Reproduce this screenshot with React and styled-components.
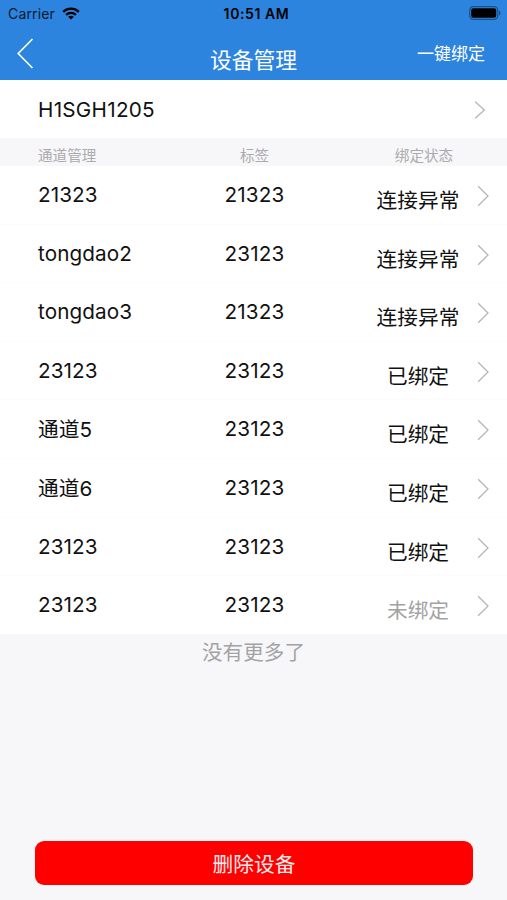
import React from 'react';
import styled, { createGlobalStyle } from 'styled-components';

const GlobalStyle = createGlobalStyle`
  * {
    box-sizing: border-box;
  }

  body {
    margin: 0;
    background: #f7f7fa;
    font-family: Inter, "Noto Sans CJK SC", sans-serif;
    color: #111;
  }
`;

const Page = styled.div`
  display: flex;
  flex-direction: column;
  height: 900px;
`;

const Header = styled.header`
  height: 80px;
  background: #2d84df;
  color: #fff;
`;

const StatusBar = styled.div`
  display: grid;
  grid-template-columns: 1fr auto 1fr;
  align-items: center;
  height: 28px;
  padding: 0 5px 0 8px;
  color: #06182b;
  font-size: 14px;
`;

const Carrier = styled.div`
  display: flex;
  align-items: center;
  gap: 7px;
  height: 26px;
  margin-bottom: 2px;
  letter-spacing: 0.15px;
`;

const Time = styled.div`
  margin-bottom: 2px;
  padding-left: 3px;
  color: #000;
  font-size: 14px;
  font-weight: 600;
  letter-spacing: 0.6px;
`;

const Battery = styled.svg`
  justify-self: end;
  margin-bottom: 2px;
`;

const NavBar = styled.nav`
  display: grid;
  grid-template-columns: 1fr auto 1fr;
  height: 52px;
  padding: 0 22px 0 17px;
`;

const BackIcon = styled.svg`
  margin-top: 10px;
`;

const Title = styled.h1`
  margin: 16px 0 0 5px;
  font-size: 21.8px;
  font-weight: 400;
  line-height: 32px;
`;

const NavAction = styled.span`
  justify-self: end;
  margin-top: 14px;
  font-size: 17px;
  line-height: 24px;
`;

const DeviceRow = styled.div`
  display: flex;
  align-items: center;
  justify-content: space-between;
  height: 58px;
  padding: 0 21px 0 38px;
  background: #fff;
  font-size: 20.7px;
  letter-spacing: 0.27px;
`;

const DeviceIcon = styled.svg`
  margin-top: 2px;
`;

const Columns = styled.div`
  display: grid;
  grid-template-columns: 172px 165px 162px;
`;

const ColumnHeads = styled(Columns)`
  height: 28px;
  padding-top: 6px;
  color: #ababad;
  font-size: 14.6px;
  line-height: 24px;
  text-align: center;
`;

const FirstHead = styled.span`
  padding-left: 38px;
  text-align: left;
`;

const LastHead = styled.span`
  padding-left: 12px;
`;

const List = styled.div`
  height: 468px;
  overflow: hidden;
  background: #fff;
`;

const Row = styled(Columns)`
  grid-template-columns: 172px 165px 162px 1fr;
  height: 58.6px;
  border-bottom: 1px solid #fcfcfc;
  font-size: 20.7px;
  line-height: 30px;
`;

const Name = styled.div`
  padding: ${props => (props.$cjk ? '15px' : '14px')} 0 0 38px;
  letter-spacing: ${props => (props.$cjk ? '0' : '0.1px')};
`;

const Tag = styled.div`
  padding-top: 14px;
  letter-spacing: 0.2px;
  text-align: center;
`;

const State = styled.div`
  display: grid;
  grid-template-columns: 1fr 30px;
  color: ${props => (props.$muted ? '#a3a3a3' : '#111')};
`;

const StateText = styled.span`
  padding: 20px 0 0 30px;
  text-align: center;
`;

const RowIcon = styled.svg`
  margin: 19px 0 0 8px;
`;

const Footnote = styled.p`
  margin: 4px 0 0;
  color: #a3a3a5;
  font-size: 20.6px;
  line-height: 30px;
  text-align: center;
`;

const DeleteButton = styled.button`
  height: 44px;
  margin: auto 34px 15px 35px;
  padding: 0;
  border: 0;
  border-radius: 9px;
  background: #f00;
  color: #ffecec;
  font-family: inherit;
  font-size: 20.7px;
`;

const channels = [
  { name: '21323', tag: '21323', state: '连接异常' },
  { name: 'tongdao2', tag: '23123', state: '连接异常' },
  { name: 'tongdao3', tag: '21323', state: '连接异常' },
  { name: '23123', tag: '23123', state: '已绑定' },
  { name: '通道5', cjk: true, tag: '23123', state: '已绑定' },
  { name: '通道6', cjk: true, tag: '23123', state: '已绑定' },
  { name: '23123', tag: '23123', state: '已绑定' },
  { name: '23123', tag: '23123', state: '未绑定', muted: true },
];

export default class App extends React.Component {
  render() {
    return (
      <Page>
        <GlobalStyle />

        <Header>
          <StatusBar>
            <Carrier>
              Carrier
              <svg width="18" height="13" viewBox="0 0 18 13" fill="none" stroke="#000" strokeWidth="2.3">
                <path d="M1.2 4.8C5.6 0.6 12.4 0.6 16.8 4.8" />
                <path d="M4.1 7.9C6.9 5.3 11.1 5.3 13.9 7.9" />
                <path d="M9 12.6L6.1 9.8C7.7 8.4 10.3 8.4 11.9 9.8Z" fill="#000" stroke="none" />
              </svg>
            </Carrier>
            <Time>10:51 AM</Time>
            <Battery width="33" height="14" viewBox="0 0 33 14">
              <rect x="0.7" y="0.7" width="28" height="12.6" rx="3.6" fill="none" stroke="#1b4f86" strokeWidth="1.2" />
              <rect x="2.2" y="2.2" width="25" height="9.6" rx="2" fill="#000" />
              <path d="M30 4.6C32 5.4 32 8.6 30 9.4Z" fill="#1b4f86" />
            </Battery>
          </StatusBar>

          <NavBar>
            <BackIcon width="17" height="31" viewBox="0 0 17 31" fill="none" stroke="#fff" strokeWidth="1.6">
              <path d="M15.5 1L1.2 15.5L15.5 30" />
            </BackIcon>
            <Title>设备管理</Title>
            <NavAction>一键绑定</NavAction>
          </NavBar>
        </Header>

        <DeviceRow>
          H1SGH1205
          <DeviceIcon width="12" height="18" viewBox="0 0 12 18" fill="none" stroke="#b5b5b8" strokeWidth="1.3">
            <path d="M1.2 0.8L10.4 9L1.2 17.2" />
          </DeviceIcon>
        </DeviceRow>

        <ColumnHeads>
          <FirstHead>通道管理</FirstHead>
          <span>标签</span>
          <LastHead>绑定状态</LastHead>
        </ColumnHeads>

        <List>
          {channels.map((channel, i) => (
            <Row key={i}>
              <Name $cjk={channel.cjk}>{channel.name}</Name>
              <Tag>{channel.tag}</Tag>
              <State $muted={channel.muted}>
                <StateText>{channel.state}</StateText>
                <RowIcon width="13" height="22" viewBox="0 0 13 22" fill="none" stroke="#b5b5b8" strokeWidth="1.3">
                  <path d="M1.2 1.2L11 11L1.2 20.8" />
                </RowIcon>
              </State>
            </Row>
          ))}
        </List>

        <Footnote>没有更多了</Footnote>

        <DeleteButton>删除设备</DeleteButton>
      </Page>
    );
  }
}
